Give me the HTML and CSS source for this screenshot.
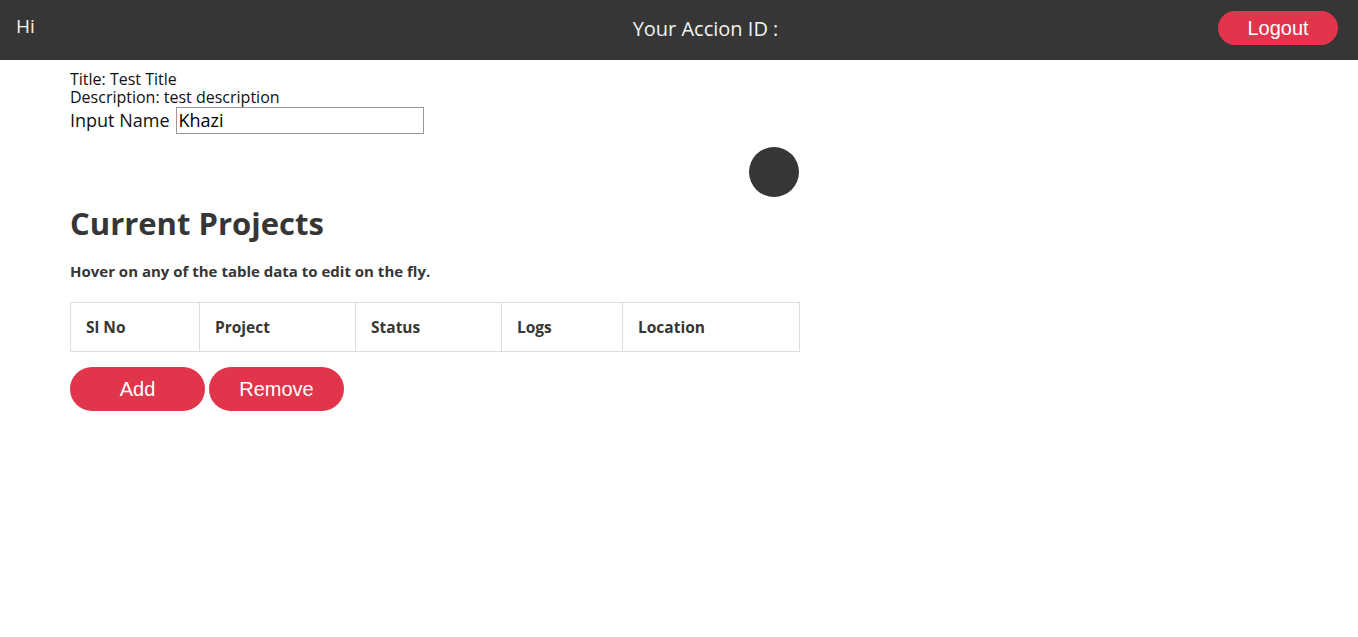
FILE: index.html
```html
<!DOCTYPE html>
<html>
<head>
<meta charset="utf-8">
<link rel="stylesheet" href="styles.css">
</head>
<body>
<header class="topbar">
  <div class="greet">Hi</div>
  <div class="accion">Your Accion ID :</div>
  <button class="logout">Logout</button>
</header>
<main class="content">
  <div class="info">Title: Test Title</div>
  <div class="info">Description: test description</div>
  <div class="name-row"><label>Input Name</label> <input class="name-input" type="text" value="Khazi"></div>
  <div class="dot-row"><div class="dot"></div></div>
  <h1 class="heading">Current Projects</h1>
  <p class="hint">Hover on any of the table data to edit on the fly.</p>
  <table class="projects">
    <thead>
      <tr>
        <th class="c1">Sl No</th>
        <th class="c2">Project</th>
        <th class="c3">Status</th>
        <th class="c4">Logs</th>
        <th class="c5">Location</th>
      </tr>
    </thead>
  </table>
  <div class="actions">
    <button class="pill">Add</button>
    <button class="pill">Remove</button>
  </div>
</main>
</body>
</html>
```

FILE: styles.css
```css
html, body {
  margin: 0;
  padding: 0;
  background: #fff;
  font-family: "Open Sans", "Lato", sans-serif;
  color: #111;
}
.topbar {
  height: 60px;
  background: #363636;
  display: flex;
  align-items: center;
  justify-content: space-between;
  padding: 0 20px 0 16px;
  position: relative;
  box-sizing: border-box;
}
.greet {
  color: #f2f2f2;
  font-size: 19px;
  align-self: flex-start;
  margin-top: 13px;
}
.accion {
  position: absolute;
  left: 0;
  right: 0;
  text-align: center;
  color: #f2f2f2;
  font-size: 20px;
  top: 15px;
  pointer-events: none;
  padding-left: 53px;
}
.logout {
  width: 120px;
  height: 34px;
  border: none;
  border-radius: 17px;
  background: #e0354a;
  color: #fff;
  font-family: "Liberation Sans", Arial, sans-serif;
  font-size: 20px;
  margin-top: -4px;
}
.content {
  width: 730px;
  margin-left: 70px;
  padding-top: 10px;
}
.info {
  font-size: 16px;
  line-height: 18px;
}
.name-row {
  display: flex;
  align-items: center;
  font-size: 18px;
  height: 28px;
}
.name-row label {
  margin-right: 6px;
}
.name-input {
  width: 248px;
  height: 27px;
  box-sizing: border-box;
  border: 1px solid #999;
  font-family: "Open Sans", sans-serif;
  font-size: 18px;
  padding: 0 2px;
  margin: 0;
}
.dot-row {
  display: flex;
  justify-content: flex-end;
  margin-top: 13px;
  margin-right: 1px;
}
.dot {
  width: 50px;
  height: 50px;
  border-radius: 50%;
  background: #363636;
}
.heading {
  margin: 8px 0 0;
  font-size: 31px;
  font-weight: 700;
  color: #363636;
  line-height: 36px;
}
.hint {
  margin: 20px 0 0;
  font-size: 15px;
  font-weight: 700;
  color: #363636;
  line-height: 20px;
}
.projects {
  margin-top: 21px;
  width: 730px;
  border-collapse: collapse;
}
.projects th {
  border: 1px solid #ddd;
  height: 49px;
  padding: 0 15px;
  text-align: left;
  font-size: 15.5px;
  font-weight: 700;
  color: #363636;
  box-sizing: border-box;
}
.c1 { width: 129px; }
.c2 { width: 156px; }
.c3 { width: 146px; }
.c4 { width: 121px; }
.actions {
  display: flex;
  gap: 4px;
  margin-top: 15px;
}
.pill {
  width: 135px;
  height: 44px;
  border: none;
  border-radius: 22px;
  background: #e0354a;
  color: #fff;
  font-family: "Liberation Sans", Arial, sans-serif;
  font-size: 20px;
}
```
